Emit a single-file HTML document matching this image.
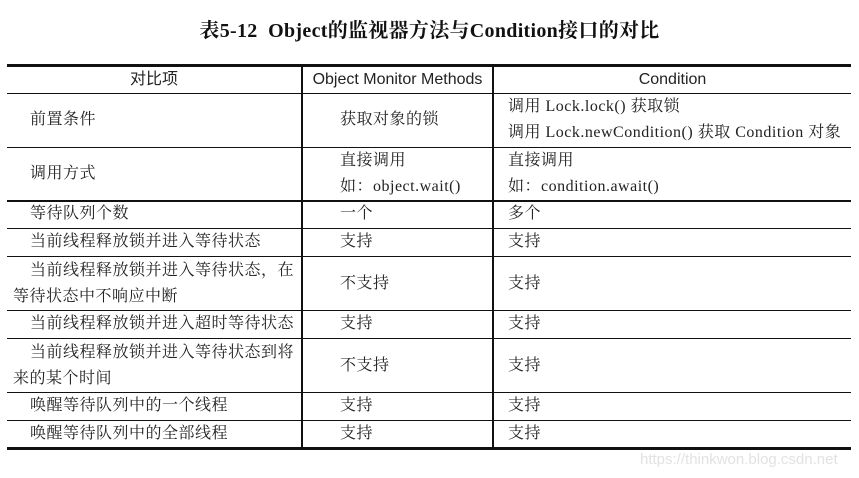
<!DOCTYPE html>
<html><head><meta charset="utf-8"><style>
body{margin:0;width:859px;height:478px;background:#fff;position:relative;overflow:hidden;font-family:"Liberation Serif","Noto Serif CJK SC","Noto Sans CJK SC",serif;color:#222}
.t{position:absolute;white-space:nowrap;font-size:16px;letter-spacing:0.5px;line-height:18px}
.h{position:absolute;left:7px;width:844px;background:#111}
.v{position:absolute;width:2px;background:#111;top:65px;height:383px}
</style></head><body>
<div class="t" style="left:0;width:859px;text-align:center;top:19px;font-size:20px;letter-spacing:0.3px;line-height:24px;font-weight:bold;color:#111">表5-12&nbsp;&nbsp;Object的监视器方法与Condition接口的对比</div>
<div class="h" style="top:64px;height:3px"></div>
<div class="h" style="top:93px;height:1px"></div>
<div class="h" style="top:147px;height:1px"></div>
<div class="h" style="top:200px;height:2px"></div>
<div class="h" style="top:228px;height:1px"></div>
<div class="h" style="top:256px;height:1px"></div>
<div class="h" style="top:310px;height:1px"></div>
<div class="h" style="top:338px;height:1px"></div>
<div class="h" style="top:392px;height:1px"></div>
<div class="h" style="top:420px;height:1px"></div>
<div class="h" style="top:447px;height:3px"></div>
<div class="v" style="left:301px"></div>
<div class="v" style="left:492px"></div>
<div class="t" style="left:7px;width:294px;text-align:center;top:71px;font-family:'Liberation Sans','Noto Sans CJK SC',sans-serif;letter-spacing:0">对比项</div>
<div class="t" style="left:303px;width:189px;text-align:center;top:71px;font-family:'Liberation Sans','Noto Sans CJK SC',sans-serif;letter-spacing:0">Object Monitor Methods</div>
<div class="t" style="left:494px;width:357px;text-align:center;top:71px;font-family:'Liberation Sans','Noto Sans CJK SC',sans-serif;letter-spacing:0">Condition</div>
<div class="t" style="left:30px;top:111px">前置条件</div>
<div class="t" style="left:340px;top:111px">获取对象的锁</div>
<div class="t" style="left:508px;top:98px">调用 Lock.lock() 获取锁</div>
<div class="t" style="left:508px;top:124px">调用 Lock.newCondition() 获取 Condition 对象</div>
<div class="t" style="left:30px;top:165px">调用方式</div>
<div class="t" style="left:340px;top:152px">直接调用</div>
<div class="t" style="left:340px;top:178px">如：object.wait()</div>
<div class="t" style="left:508px;top:152px">直接调用</div>
<div class="t" style="left:508px;top:178px">如：condition.await()</div>
<div class="t" style="left:30px;top:205px">等待队列个数</div>
<div class="t" style="left:340px;top:205px">一个</div>
<div class="t" style="left:508px;top:205px">多个</div>
<div class="t" style="left:30px;top:233px">当前线程释放锁并进入等待状态</div>
<div class="t" style="left:340px;top:233px">支持</div>
<div class="t" style="left:508px;top:233px">支持</div>
<div class="t" style="left:30px;top:262px">当前线程释放锁并进入等待状态，在</div>
<div class="t" style="left:13px;top:288px">等待状态中不响应中断</div>
<div class="t" style="left:340px;top:275px">不支持</div>
<div class="t" style="left:508px;top:275px">支持</div>
<div class="t" style="left:30px;top:315px">当前线程释放锁并进入超时等待状态</div>
<div class="t" style="left:340px;top:315px">支持</div>
<div class="t" style="left:508px;top:315px">支持</div>
<div class="t" style="left:30px;top:344px">当前线程释放锁并进入等待状态到将</div>
<div class="t" style="left:13px;top:370px">来的某个时间</div>
<div class="t" style="left:340px;top:357px">不支持</div>
<div class="t" style="left:508px;top:357px">支持</div>
<div class="t" style="left:30px;top:397px">唤醒等待队列中的一个线程</div>
<div class="t" style="left:340px;top:397px">支持</div>
<div class="t" style="left:508px;top:397px">支持</div>
<div class="t" style="left:30px;top:425px">唤醒等待队列中的全部线程</div>
<div class="t" style="left:340px;top:425px">支持</div>
<div class="t" style="left:508px;top:425px">支持</div>
<div class="t" style="left:640px;top:451px;font-family:'Liberation Sans',sans-serif;font-size:15px;letter-spacing:0;color:#e2e2e2">https://thinkwon.blog.csdn.net</div>
</body></html>
